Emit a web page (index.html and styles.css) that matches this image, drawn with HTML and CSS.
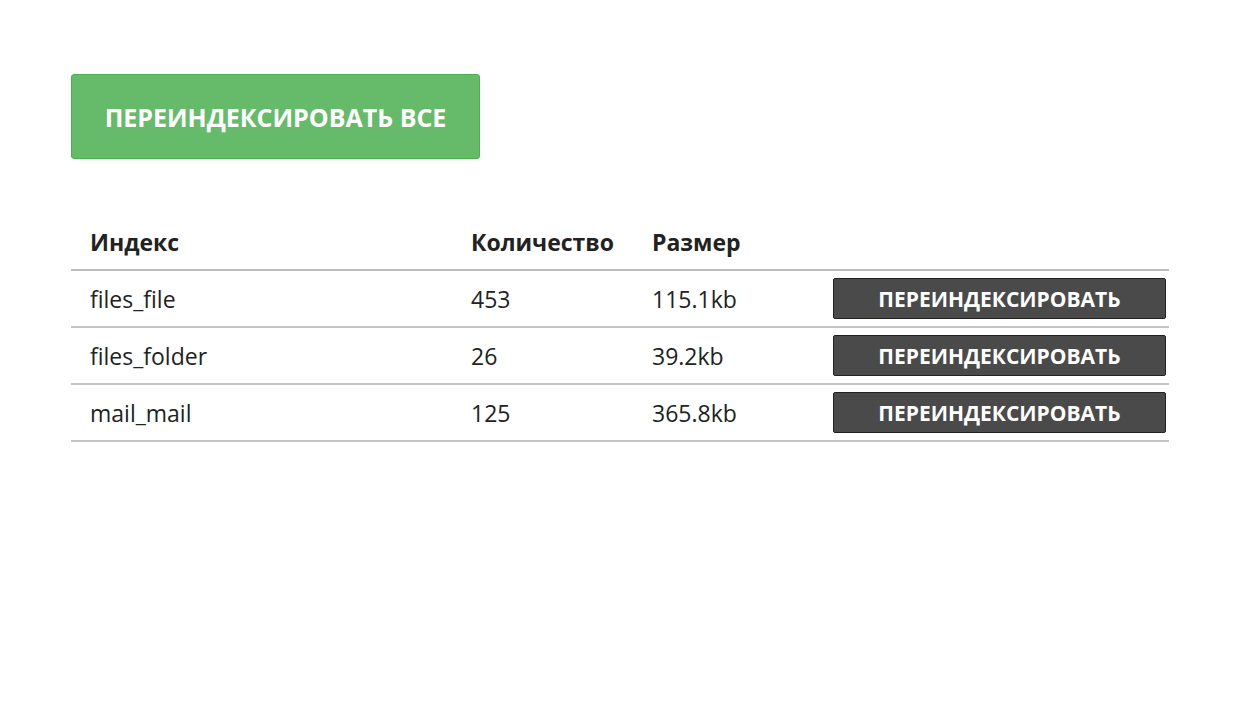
FILE: index.html
```html
<!DOCTYPE html>
<html lang="ru">
<head>
<meta charset="utf-8">
<link rel="stylesheet" href="styles.css">
</head>
<body>
<div class="page">
  <button class="btn-all">ПЕРЕИНДЕКСИРОВАТЬ ВСЕ</button>
  <table class="idx">
    <thead>
      <tr><th class="c1">Индекс</th><th class="c2">Количество</th><th class="c3">Размер</th><th class="c4"></th></tr>
    </thead>
    <tbody>
      <tr><td>files_file</td><td>453</td><td>115.1kb</td><td><button class="btn-one">ПЕРЕИНДЕКСИРОВАТЬ</button></td></tr>
      <tr><td>files_folder</td><td>26</td><td>39.2kb</td><td><button class="btn-one">ПЕРЕИНДЕКСИРОВАТЬ</button></td></tr>
      <tr><td>mail_mail</td><td>125</td><td>365.8kb</td><td><button class="btn-one">ПЕРЕИНДЕКСИРОВАТЬ</button></td></tr>
    </tbody>
  </table>
</div>
</body>
</html>
```
FILE: styles.css
```css
html, body { margin: 0; padding: 0; background: #fff; }
body { font-family: "Open Sans", "Liberation Sans", sans-serif; color: #222; }
.page { padding: 74px 0 0 71px; }
.btn-all {
  display: block;
  width: 409px; height: 85px;
  background: #66bb6a;
  border: 1px solid #4caf50;
  border-radius: 3px;
  color: #fff;
  font-family: "Open Sans", sans-serif;
  font-weight: 700;
  font-size: 25px;
  padding: 0;
  cursor: pointer;
}
.idx {
  margin-top: 64px;
  width: 1098px;
  table-layout: fixed;
  border-collapse: collapse;
  font-size: 23px;
}
.idx th, .idx td { box-sizing: border-box; }
.idx th {
  text-align: left;
  font-weight: 700;
  height: 47px;
  padding: 0 0 9px 19px;
  border-bottom: 2px solid #bbb;
  vertical-align: middle;
}
.idx td {
  height: 57px;
  padding: 0 0 0 19px;
  border-bottom: 2px solid #c4c4c4;
  vertical-align: middle;
}
.c1 { width: 381px; }
.c2 { width: 181px; }
.c3 { width: 181px; }
.c4 { width: 355px; }
.btn-one {
  display: block;
  width: 333px; height: 41px;
  background: #4a4a4a;
  border: 1px solid #222;
  border-radius: 2px;
  color: #fff;
  font-family: "Open Sans", sans-serif;
  font-weight: 700;
  font-size: 21px;
  padding: 0;
}
```
